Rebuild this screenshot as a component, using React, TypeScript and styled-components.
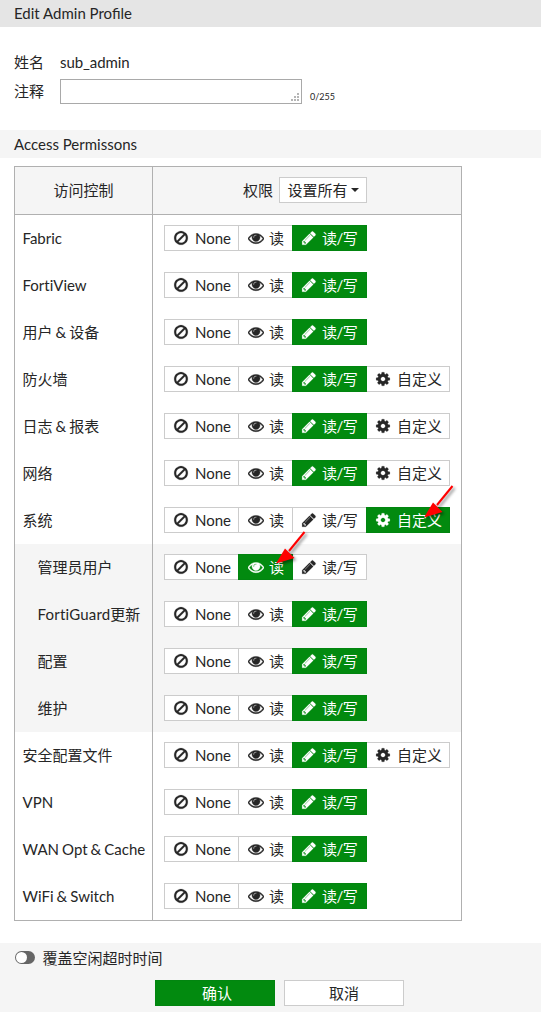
import React from 'react';
import styled, { createGlobalStyle, css } from 'styled-components';

const GlobalStyle = createGlobalStyle`
  * { box-sizing: border-box; }
  body {
    margin: 0;
    background: #fff;
    color: #262626;
    font: 15px/20px Lato, "Noto Sans CJK SC", sans-serif;
  }
  button, textarea { font: inherit; color: inherit; }
`;

const Page = styled.main`
  position: relative;
  display: flex;
  flex-direction: column;
  width: 541px;
  height: 1012px;
  overflow: hidden;
`;

const TitleBar = styled.header`
  height: 27px;
  padding: 3px 14px;
  background: #e5e5e5;
`;

const Form = styled.section`
  height: 103px;
  padding: 25px 14px 0;
`;

const Field = styled.div`
  display: flex;
  align-items: flex-start;
  height: 27px;
`;

const FieldLabel = styled.label`
  width: 46px;
  line-height: 20px;
`;

const FieldValue = styled.span`
  line-height: 20px;
  letter-spacing: -0.07px;
`;

const CommentLabel = styled(FieldLabel)`
  padding-top: 2px;
`;

const CommentBox = styled.div`
  display: flex;
  align-items: flex-end;
  justify-content: flex-end;
  width: 242px;
  height: 25px;
  padding: 2px;
  border: 1px solid #a9a9a9;
  background: #fff;
`;

const Counter = styled.span`
  margin: 8px 0 0 8px;
  font-size: 9px;
`;

const SectionTitle = styled.h2`
  flex: none;
  height: 28px;
  margin: 0 0 8px;
  padding: 4px 14px 0;
  background: #f5f5f5;
  font-size: 15px;
  line-height: 20px;
  font-weight: 400;
`;

const Table = styled.section`
  flex: none;
  width: 448px;
  margin-left: 14px;
  border: 1px solid #b0b0b0;
`;

const Row = styled.div<{ $sub?: boolean }>`
  display: grid;
  grid-template-columns: 137px 1fr;
  height: 47px;
  background: ${(p) => (p.$sub ? '#f5f5f5' : '#fff')};
`;

const HeaderRow = styled(Row)`
  height: 48px;
  background: #f5f5f5;
  border-bottom: 1px solid #b0b0b0;
`;

const HeaderCell = styled.div`
  display: flex;
  align-items: center;
  justify-content: center;
  gap: 6px;
  padding-bottom: 1px;
  & + & {
    padding-right: 4px;
    border-left: 1px solid #b0b0b0;
  }
`;

const NameCell = styled.div<{ $sub?: boolean }>`
  display: flex;
  align-items: center;
  padding: 0 0 2px ${(p) => (p.$sub ? 22.5 : 7.5)}px;
  font-variant-ligatures: none;
  word-spacing: -0.8px;
  white-space: nowrap;
`;

const Latin = styled.span`
  letter-spacing: 0.2px;
`;

const ControlCell = styled.div`
  display: flex;
  align-items: center;
  padding: 0 0 2px 11px;
  border-left: 1px solid #b0b0b0;
`;

const Dropdown = styled.button`
  display: flex;
  align-items: center;
  justify-content: center;
  gap: 3px;
  width: 88px;
  height: 26px;
  padding: 0;
  border: 1px solid #ccc;
  background: #fff;
`;

const Caret = styled.span`
  border: 4px solid transparent;
  border-top-color: #262626;
  border-bottom: 0;
`;

const Option = styled.button<{ $width: number; $active: boolean; $level: Level }>`
  display: flex;
  align-items: center;
  width: ${(p) => p.$width}px;
  height: 26px;
  padding: 0 0 0 ${(p) => (p.$level === 'read' ? 9 : 8)}px;
  border: 1px solid #ccc;
  background: #fff;
  letter-spacing: ${(p) => (p.$level === 'write' ? '-0.5px' : 'normal')};
  white-space: nowrap;
  & + & { margin-left: -1px; }
  ${(p) =>
    p.$active &&
    css`
      z-index: 1;
      border-color: #028510;
      background: #028a0f;
      color: #fff;
    `}
`;

const Glyph = styled.svg<{ $level: Level }>`
  flex: none;
  width: 16px;
  height: 16px;
  margin-right: ${(p) => (p.$level === 'read' || p.$level === 'write' ? 5 : 6)}px;
  fill: currentColor;
  stroke: currentColor;
  stroke-width: ${(p) => (p.$level === 'read' ? 45 : 20)};
`;

const Footer = styled.footer`
  flex: 1;
  margin-top: 22px;
  padding: 5px 15px 0;
  background: #f5f5f5;
`;

const Override = styled.div`
  display: flex;
  align-items: center;
  gap: 7.5px;
  height: 20px;
`;

const Switch = styled.span`
  display: flex;
  width: 20px;
  height: 13px;
  margin-top: -1px;
  padding: 1px;
  border-radius: 7px;
  background: #666;
  &::before {
    content: '';
    width: 11px;
    height: 11px;
    border-radius: 50%;
    background: #fff;
  }
`;

const Actions = styled.div`
  display: flex;
  gap: 9px;
  margin: 12px 0 0 140px;
`;

const ActionButton = styled.button<{ $primary?: boolean }>`
  width: 120px;
  height: 26px;
  padding: 0 0 0 ${(p) => (p.$primary ? 4 : 0)}px;
  border: 1px solid ${(p) => (p.$primary ? '#028510' : '#ccc')};
  background: ${(p) => (p.$primary ? '#028a0f' : '#fff')};
  color: ${(p) => (p.$primary ? '#fff' : '#262626')};
`;

const Pointer = styled.svg<{ $x: number; $y: number }>`
  position: absolute;
  z-index: 2;
  left: ${(p) => p.$x}px;
  top: ${(p) => p.$y}px;
  filter: drop-shadow(2px 2px 1.5px rgba(0, 0, 0, 0.45));
  pointer-events: none;
  overflow: visible;
`;

type Level = 'none' | 'read' | 'write' | 'custom';

const paths: Record<Level, string> = {
  none: 'M1440 893q0-161-87-295l-754 753q137 89 297 89 111 0 211.5-43.5t173.5-116.5 116-174.5 43-212.5zm-999 299l755-754q-135-91-300-91-148 0-273 73t-198 199-73 274q0 162 89 299zm1223-299q0 157-61 300t-163.5 246-245 164-298.5 61-298.5-61-245-164-163.5-246-61-300 61-299.5 163.5-245.5 245-164 298.5-61 298.5 61 245 164 163.5 245.5 61 299.5z',
  read: 'M1664 960q-152-236-381-353 61 104 61 225 0 185-131.5 316.5t-316.5 131.5-316.5-131.5-131.5-316.5q0-121 61-225-229 117-381 353 133 205 333.5 326.5t434.5 121.5 434.5-121.5 333.5-326.5zm-720-384q0-20-14-34t-34-14q-125 0-214.5 89.5t-89.5 214.5q0 20 14 34t34 14 34-14 14-34q0-86 61-147t147-61q20 0 34-14t14-34zm848 384q0 34-20 69-140 230-376.5 368.5t-499.5 138.5-499.5-139-376.5-368q-20-35-20-69t20-69q140-229 376.5-368t499.5-139 499.5 139 376.5 368q20 35 20 69z',
  write: 'M491 1536l91-91-235-235-91 91v107h128v128h107zm523-928q0-22-22-22-10 0-17 7l-542 542q-7 7-7 17 0 22 22 22 10 0 17-7l542-542q7-7 7-17zm-54-192l416 416-832 832h-416v-416zm683 96q0 53-37 90l-166 166-416-416 166-165q36-38 90-38 53 0 91 38l235 234q37 39 37 91z',
  custom: 'M1152 896q0-106-75-181t-181-75-181 75-75 181 75 181 181 75 181-75 75-181zm512-109v222q0 12-8 23t-20 13l-185 28q-19 54-39 91 35 50 107 138 10 12 10 25t-9 23q-27 37-99 108t-94 71q-12 0-26-9l-138-108q-44 23-91 38-16 136-29 186-7 28-36 28h-222q-14 0-24.5-8.5t-11.5-21.5l-28-184q-49-16-90-37l-141 107q-10 9-25 9-14 0-25-11-126-114-165-168-7-10-7-23 0-12 8-23 15-21 51-66.5t54-70.5q-27-50-41-99l-183-27q-13-2-21-12.5t-8-23.5v-222q0-12 8-23t19-13l186-28q14-46 39-92-40-57-107-138-10-12-10-24 0-10 9-23 26-36 98.5-107.5t94.5-71.5q13 0 26 10l138 107q44-23 91-38 16-136 29-186 7-28 36-28h222q14 0 24.5 8.5t11.5 21.5l28 184q49 16 90 37l142-107q9-9 24-9 13 0 25 10 129 119 165 170 7 8 7 22 0 12-8 23-15 21-51 66.5t-54 70.5q26 50 41 98l183 28q13 2 21 12.5t8 23.5z',
};

const options: { level: Level; label: string; width: number }[] = [
  { level: 'none', label: 'None', width: 75 },
  { level: 'read', label: '读', width: 55 },
  { level: 'write', label: '读/写', width: 75 },
  { level: 'custom', label: '自定义', width: 84 },
];

const rows: { name: React.ReactNode; value?: Level; custom?: boolean; sub?: boolean }[] = [
  { name: 'Fabric' },
  { name: 'FortiView' },
  { name: '用户 & 设备' },
  { name: '防火墙', custom: true },
  { name: '日志 & 报表', custom: true },
  { name: '网络', custom: true },
  { name: '系统', custom: true, value: 'custom' },
  { name: '管理员用户', sub: true, value: 'read' },
  { name: <><Latin>FortiGuard</Latin>更新</>, sub: true },
  { name: '配置', sub: true },
  { name: '维护', sub: true },
  { name: '安全配置文件', custom: true },
  { name: 'VPN' },
  { name: 'WAN Opt & Cache' },
  { name: 'WiFi & Switch' },
];

function Arrow({ x, y }: { x: number; y: number }) {
  return (
    <Pointer $x={x} $y={y} width="32" height="34" viewBox="0 0 32 34">
      <path d="M14 20 29.5 1" stroke="#f00" strokeWidth="2" />
      <path d="M1 32.5 10 17.5 19.5 27Z" fill="#f00" />
    </Pointer>
  );
}

export default function App() {
  return (
    <>
      <GlobalStyle />
      <Page>
        <TitleBar>Edit Admin Profile</TitleBar>
        <Form>
          <Field>
            <FieldLabel>姓名</FieldLabel>
            <FieldValue>sub_admin</FieldValue>
          </Field>
          <Field>
            <CommentLabel>注释</CommentLabel>
            <CommentBox>
              <svg width="8" height="8" fill="#b5b5b5" shapeRendering="crispEdges">
                <path d="M6 0h2v2H6zM3 3h2v2H3zM6 3h2v2H6zM0 6h2v2H0zM3 6h2v2H3zM6 6h2v2H6z" />
              </svg>
            </CommentBox>
            <Counter>0/255</Counter>
          </Field>
        </Form>
        <SectionTitle>Access Permissons</SectionTitle>
        <Table>
          <HeaderRow>
            <HeaderCell>访问控制</HeaderCell>
            <HeaderCell>
              权限
              <Dropdown>
                设置所有
                <Caret />
              </Dropdown>
            </HeaderCell>
          </HeaderRow>
          {rows.map((row, index) => (
            <Row key={index} $sub={row.sub}>
              <NameCell $sub={row.sub}>{row.name}</NameCell>
              <ControlCell>
                {options
                  .filter((o) => o.level !== 'custom' || row.custom)
                  .map((o) => (
                    <Option
                      key={o.level}
                      $width={o.width}
                      $active={o.level === (row.value ?? 'write')}
                      $level={o.level}
                    >
                      <Glyph $level={o.level} viewBox="0 0 1792 1792">
                        <path d={paths[o.level]} />
                      </Glyph>
                      {o.label}
                    </Option>
                  ))}
              </ControlCell>
            </Row>
          ))}
        </Table>
        <Footer>
          <Override>
            <Switch />
            覆盖空闲超时时间
          </Override>
          <Actions>
            <ActionButton $primary>确认</ActionButton>
            <ActionButton>取消</ActionButton>
          </Actions>
        </Footer>
        <Arrow x={423} y={485} />
        <Arrow x={275} y={531} />
      </Page>
    </>
  );
}
